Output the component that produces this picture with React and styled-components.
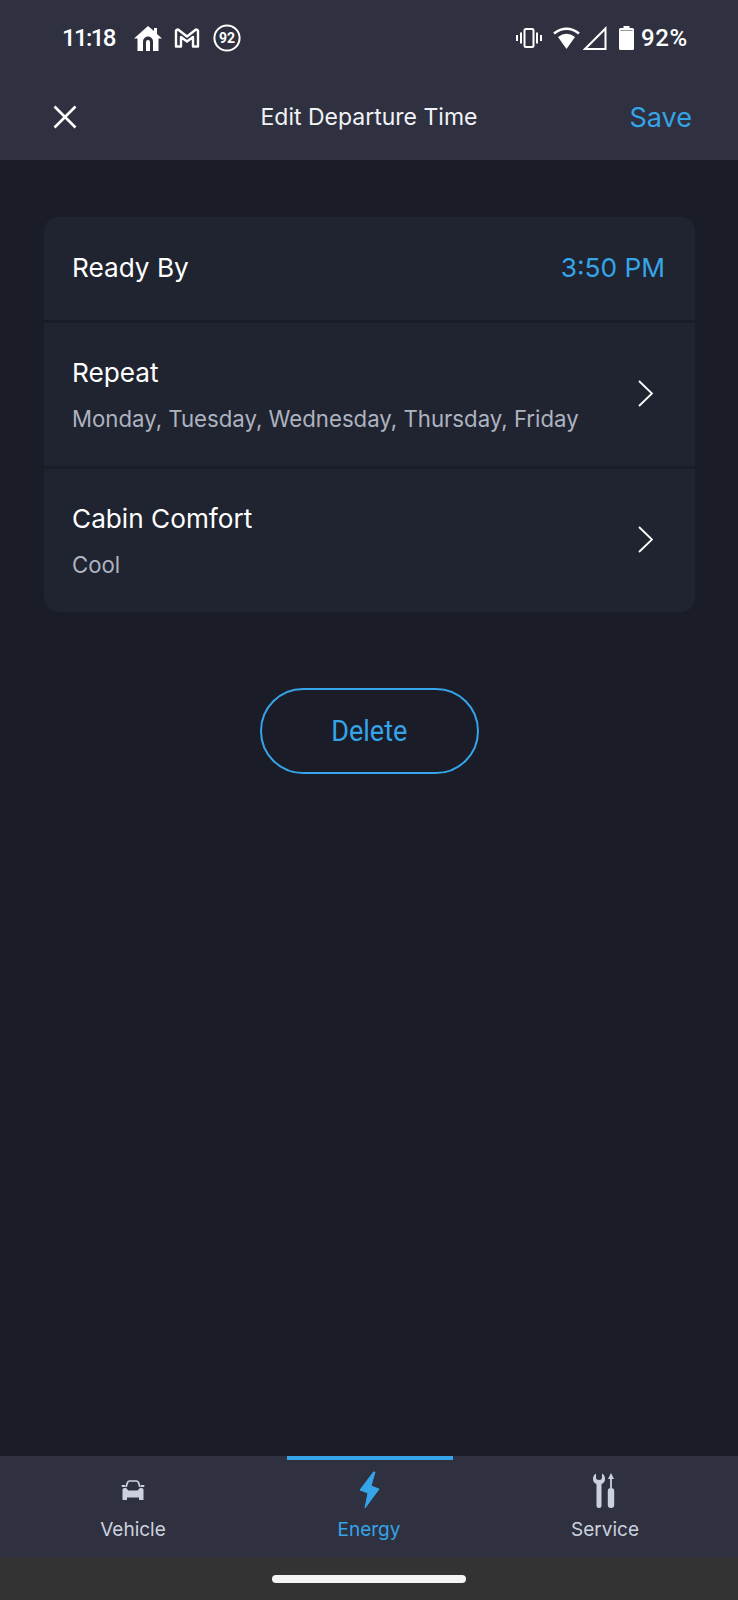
import styled, { createGlobalStyle } from "styled-components";

const GlobalStyle = createGlobalStyle`
  body {
    margin: 0;
    background: #1a1c28;
    font-family: Inter, "Noto Sans", "Liberation Sans", sans-serif;
  }
`;

function HouseIcon() {
  return (
    <StatusSvg width="28" height="25" viewBox="0 0 28 25" $left={19}>
      <path
        fill="#fff"
        d="M14 0L20 5V2H23V8L28 12.5H24.5V25H19V15.5A5 5 0 0 0 9 15.5V25H3.5V12.5H0Z"
      />
      <path fill="#fff" d="M12 25V16A2 2 0 0 1 16 16V25Z" />
    </StatusSvg>
  );
}

function MailIcon() {
  return (
    <StatusSvg width="26" height="20" viewBox="0 0 26 20" $left={12}>
      <path
        fill="none"
        stroke="#fff"
        strokeWidth="2.4"
        strokeLinejoin="round"
        d="M2 2.5Q2.5 1.5 4 1.5L13 8.5L22 1.5Q23.5 1.5 24 2.5V18.5H19V9L13 13.5L7 9V18.5H2Z"
      />
    </StatusSvg>
  );
}

function BadgeIcon() {
  return (
    <StatusSvg width="28" height="28" viewBox="0 0 28 28" $left={13}>
      <circle cx="14" cy="14" r="12.6" fill="none" stroke="#fff" strokeWidth="2" />
      <text
        x="14"
        y="19"
        fill="#fff"
        fontSize="14"
        fontWeight="700"
        textAnchor="middle"
        fontFamily="Roboto, sans-serif"
      >
        92
      </text>
    </StatusSvg>
  );
}

function VibrateIcon() {
  return (
    <StatusSvg width="26" height="20" viewBox="0 0 26 20">
      <rect x="8.5" y="1" width="9" height="18" rx="1.5" fill="none" stroke="#fff" strokeWidth="2" />
      <path stroke="#fff" strokeWidth="2" d="M1 7V13M5 4.5V15.5M21 4.5V15.5M25 7V13" />
    </StatusSvg>
  );
}

function WifiIcon() {
  return (
    <StatusSvg width="27" height="22" viewBox="0 0 27 22" $left={11}>
      <path fill="none" stroke="#fff" strokeWidth="2.6" d="M1 6.5Q13.5 -3 26 6.5" />
      <path fill="#fff" d="M5 10Q13.5 3.5 22 10L13.5 22Z" />
    </StatusSvg>
  );
}

function SignalIcon() {
  return (
    <StatusSvg width="24" height="24" viewBox="0 0 24 24" $left={3}>
      <path fill="none" stroke="#fff" strokeWidth="2" d="M22.5 2.5V23H2Z" />
    </StatusSvg>
  );
}

function BatteryIcon() {
  return (
    <StatusSvg width="15" height="24" viewBox="0 0 15 24" $left={12}>
      <path
        fill="#fff"
        d="M4.5 0H10.5V2H13.5Q15 2 15 3.5V22.5Q15 24 13.5 24H1.5Q0 24 0 22.5V3.5Q0 2 1.5 2H4.5Z"
      />
      <rect x="1.5" y="4" width="12" height="1" fill="#2f3140" opacity="0.5" />
    </StatusSvg>
  );
}

function CloseIcon() {
  return (
    <svg width="24" height="24" viewBox="0 0 24 24">
      <path stroke="#fff" strokeWidth="2.6" d="M1.5 1.5L22.5 22.5M22.5 1.5L1.5 22.5" />
    </svg>
  );
}

function ChevronIcon() {
  return (
    <ChevronSvg width="15" height="27" viewBox="0 0 15 27">
      <path fill="none" stroke="#fff" strokeWidth="1.8" d="M1 1L14 13.5L1 26" />
    </ChevronSvg>
  );
}

function CarIcon() {
  return (
    <svg width="24" height="20" viewBox="0 0 24 20">
      <path
        fill="none"
        stroke="#ccd1df"
        strokeWidth="1.7"
        d="M5 7L6.6 2.4Q7 1 8.6 1H15.4Q17 1 17.4 2.4L19 7"
      />
      <path fill="#ccd1df" d="M0.5 5H4L4.6 7H1.5Q0.5 7 0.5 5ZM23.5 5H20L19.4 7H22.5Q23.5 7 23.5 5Z" />
      <path
        fill="#ccd1df"
        d="M1.5 9.5Q1.5 8 3.5 8H5L7.5 10.5H16.5L19 8H20.5Q22.5 8 22.5 9.5V19.5Q22.5 20 22 20H18.5Q18 20 18 19.5V17.5H6V19.5Q6 20 5.5 20H2Q1.5 20 1.5 19.5Z"
      />
    </svg>
  );
}

function BoltIcon() {
  return (
    <svg width="21" height="38" viewBox="0 0 21 38">
      <path
        fill="#35a4e8"
        stroke="#35a4e8"
        strokeWidth="1"
        strokeLinejoin="round"
        d="M14.5 1L1 19L9 22L6 37L20 18L12 15L16 1Z"
      />
    </svg>
  );
}

function ToolsIcon() {
  return (
    <svg width="24" height="35" viewBox="0 0 24 35">
      <path
        fill="#ccd1df"
        d="M3 0.5V4.5Q3 7 6 7Q9 7 9 4.5V0.5Q12 2 12 6Q12 9.5 8.5 11V32.5A2.5 2.5 0 0 1 3.5 32.5V11Q0 9.5 0 6Q0 2 3 0.5Z"
      />
      <path fill="#ccd1df" d="M18 0L21 6H18.9V15H17.1V6H15Z" />
      <rect x="14.8" y="15" width="6.4" height="20" rx="3" fill="#ccd1df" />
    </svg>
  );
}

const rows = [
  { title: "Repeat", detail: "Monday, Tuesday, Wednesday, Thursday, Friday" },
  { title: "Cabin Comfort", detail: "Cool" },
];

const tabs = [
  { label: "Vehicle", icon: <CarIcon /> },
  { label: "Energy", icon: <BoltIcon />, active: true },
  { label: "Service", icon: <ToolsIcon /> },
];

export default function App() {
  return (
    <Page>
      <GlobalStyle />
      <Header>
        <StatusBar>
          <StatusGroup>
            <Clock>11:18</Clock>
            <HouseIcon />
            <MailIcon />
            <BadgeIcon />
          </StatusGroup>
          <StatusGroup>
            <VibrateIcon />
            <WifiIcon />
            <SignalIcon />
            <BatteryIcon />
            <BatteryText>92%</BatteryText>
          </StatusGroup>
        </StatusBar>
        <AppBar>
          <CloseButton>
            <CloseIcon />
          </CloseButton>
          <Title>Edit Departure Time</Title>
          <SaveButton>Save</SaveButton>
        </AppBar>
      </Header>

      <Content>
        <Card>
          <ReadyRow>
            <RowTitle>Ready By</RowTitle>
            <TimeValue>3:50 PM</TimeValue>
          </ReadyRow>
          {rows.map((row) => (
            <DetailRow key={row.title}>
              <RowText>
                <RowTitle>{row.title}</RowTitle>
                <RowDetail>{row.detail}</RowDetail>
              </RowText>
              <ChevronIcon />
            </DetailRow>
          ))}
        </Card>
        <DeleteButton>
          <DeleteLabel>Delete</DeleteLabel>
        </DeleteButton>
      </Content>

      <TabBar>
        {tabs.map((tab) => (
          <Tab key={tab.label} $active={tab.active}>
            <TabIcon>{tab.icon}</TabIcon>
            <TabLabel>{tab.label}</TabLabel>
          </Tab>
        ))}
      </TabBar>
      <HomeArea>
        <HomeHandle />
      </HomeArea>
    </Page>
  );
}

const Page = styled.div`
  width: 738px;
  height: 1600px;
  display: flex;
  flex-direction: column;
  background: #1a1c28;
  overflow: hidden;
`;

const Header = styled.header`
  height: 160px;
  background: #2f3140;
  flex-shrink: 0;
`;

const StatusBar = styled.div`
  height: 74px;
  padding: 2px 50px 0 62px;
  box-sizing: border-box;
  display: flex;
  justify-content: space-between;
  align-items: center;
`;

const StatusGroup = styled.div`
  display: flex;
  align-items: center;
`;

const StatusSvg = styled.svg`
  margin-left: ${(p) => p.$left || 0}px;
  flex-shrink: 0;
`;

const ChevronSvg = styled.svg`
  margin-bottom: 2px;
  flex-shrink: 0;
`;

const Clock = styled.span`
  font-family: Roboto, sans-serif;
  font-size: 24px;
  font-weight: 500;
  letter-spacing: -1.6px;
  color: #fff;
`;

const BatteryText = styled(Clock)`
  margin-left: 7px;
  letter-spacing: 0.7px;
`;

const AppBar = styled.div`
  height: 86px;
  padding: 0 46px;
  box-sizing: border-box;
  display: grid;
  grid-template-columns: 1fr auto 1fr;
  align-items: center;
`;

const CloseButton = styled.div`
  margin-left: 7px;
  height: 24px;
`;

const Title = styled.div`
  font-size: 23px;
  color: #f2f3f6;
`;

const SaveButton = styled.div`
  justify-self: end;
  font-size: 27px;
  color: #35a4e8;
`;

const Content = styled.main`
  flex: 1;
  padding: 57px 43px 0 44px;
  display: flex;
  flex-direction: column;
  align-items: center;
`;

const Card = styled.section`
  width: 100%;
  border-radius: 14px;
  overflow: hidden;
  display: flex;
  flex-direction: column;
  gap: 3px;
`;

const ReadyRow = styled.div`
  height: 103px;
  padding: 0 30px 3px 28px;
  box-sizing: border-box;
  background: #1f2430;
  display: flex;
  justify-content: space-between;
  align-items: center;
`;

const DetailRow = styled.div`
  height: 143px;
  padding: 0 42px 0 28px;
  box-sizing: border-box;
  background: #1f2430;
  display: flex;
  justify-content: space-between;
  align-items: center;
`;

const RowText = styled.div`
  display: flex;
  flex-direction: column;
  gap: 15px;
`;

const RowTitle = styled.div`
  font-size: 26.2px;
  line-height: 33px;
  color: #fff;
`;

const RowDetail = styled.div`
  font-size: 22.2px;
  line-height: 30px;
  color: #aeb3c0;
`;

const TimeValue = styled.div`
  font-size: 26.3px;
  color: #35a4e8;
`;

const DeleteButton = styled.div`
  margin-top: 76px;
  width: 219px;
  height: 86px;
  box-sizing: border-box;
  border: 2px solid #35a4e8;
  border-radius: 43px;
  display: flex;
  justify-content: center;
  align-items: center;
`;

const DeleteLabel = styled.span`
  display: inline-block;
  font-family: Roboto, sans-serif;
  font-size: 30px;
  color: #35a4e8;
  transform: scaleX(0.9);
  margin-bottom: 2px;
`;

const TabBar = styled.nav`
  height: 101px;
  flex-shrink: 0;
  padding: 0 15px;
  background: #2f3140;
  display: grid;
  grid-template-columns: repeat(3, 1fr);
`;

const Tab = styled.div`
  position: relative;
  display: flex;
  flex-direction: column;
  align-items: center;
  color: ${(p) => (p.$active ? "#35a4e8" : "#ccd1df")};

  &::before {
    content: "";
    display: ${(p) => (p.$active ? "block" : "none")};
    position: absolute;
    top: 0;
    left: 36px;
    right: 34px;
    height: 4px;
    background: #35a4e8;
  }
`;

const TabIcon = styled.div`
  height: 61px;
  display: flex;
  justify-content: center;
  align-items: center;
  padding-top: 7px;
  box-sizing: border-box;
`;

const TabLabel = styled.div`
  font-size: 19px;
  line-height: 26px;
`;

const HomeArea = styled.div`
  height: 43px;
  flex-shrink: 0;
  background: #333333;
  display: flex;
  justify-content: center;
  padding-top: 18px;
  box-sizing: border-box;
`;

const HomeHandle = styled.div`
  width: 194px;
  height: 8px;
  border-radius: 4px;
  background: #f4f4f4;
`;
